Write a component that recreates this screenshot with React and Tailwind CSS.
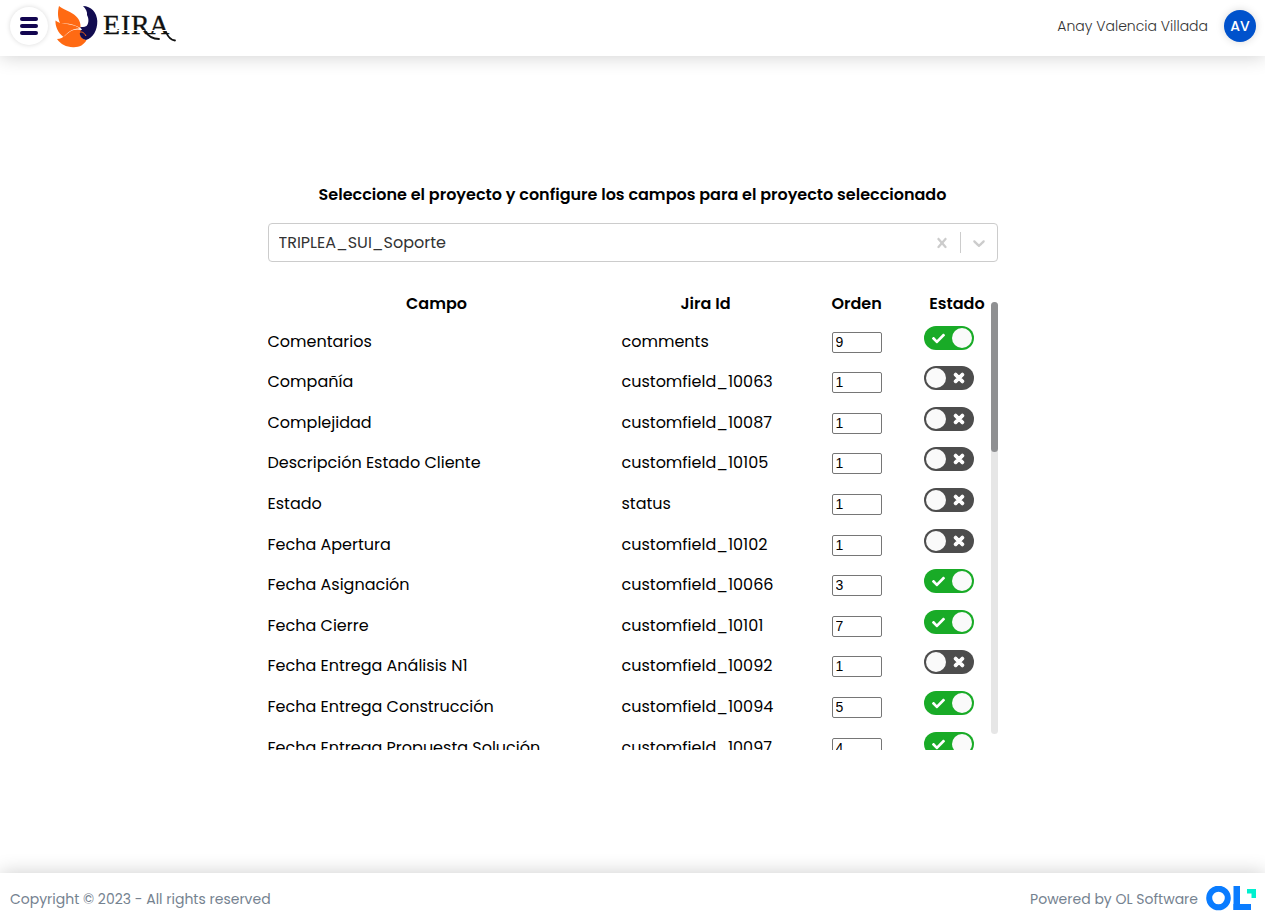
import { useState } from "react";
import { FaCheck, FaTimes } from "react-icons/fa";

const FIELDS = [
  { name: "Comentarios", jiraId: "comments", order: 9, active: true },
  { name: "Compañía", jiraId: "customfield_10063", order: 1, active: false },
  { name: "Complejidad", jiraId: "customfield_10087", order: 1, active: false },
  { name: "Descripción Estado Cliente", jiraId: "customfield_10105", order: 1, active: false },
  { name: "Estado", jiraId: "status", order: 1, active: false },
  { name: "Fecha Apertura", jiraId: "customfield_10102", order: 1, active: false },
  { name: "Fecha Asignación", jiraId: "customfield_10066", order: 3, active: true },
  { name: "Fecha Cierre", jiraId: "customfield_10101", order: 7, active: true },
  { name: "Fecha Entrega Análisis N1", jiraId: "customfield_10092", order: 1, active: false },
  { name: "Fecha Entrega Construcción", jiraId: "customfield_10094", order: 5, active: true },
  { name: "Fecha Entrega Propuesta Solución", jiraId: "customfield_10097", order: 4, active: true },
];

function EiraLogo() {
  return (
    <svg width="124" height="46" viewBox="0 0 124 46" role="img" aria-label="EIRA">
      {/* Wings */}
      <g fill="#ff6a13" transform="translate(1 2)">
        <path d="M4 1C7 4 14 6 19 9.500C24 13 26 18 25.500 23C20 20 12 17.500 5.500 19C2.500 13 2.500 7 4 1Z" />
        <path d="M0.500 15.500C5 19.500 14 18.500 19 20.500C22 21.500 24 22.500 24.500 23.500C18 23 13 27 8.500 32C3 28 0 21 0.500 15.500Z" />
        <path d="M2 34C9 34 12 27.500 17 25.500C20 24.300 24 24 26 25L25.500 31C27 33.500 29 34.500 31.500 35C29 40 24 42.500 18 42.200C11 42 6 39.500 2 34Z" />
      </g>
      {/* Head and neck */}
      <path
        fill="#120c50"
        transform="translate(1 2)"
        d="M28 1C36 1 42 7.500 42.300 16C42.500 25 38 33 31 35C28 34.500 25.500 32.500 25 30C24.500 28 25 25.500 27 24.500L25 22.500C27 21.500 29 22.500 31.500 21C34 18.500 34 13.500 32 10C32.500 7 31 4 28 1Z"
      />
      <path fill="none" stroke="#ff6a13" strokeWidth="1" d="M25 30C27 28 30 29 32 33" />
      <text
        y="31"
        fill="#111"
        stroke="#111"
        strokeWidth="0.300"
        fontSize="28"
        fontFamily="'Liberation Serif', serif"
      >
        <tspan x="49">E</tspan>
        <tspan x="67">I</tspan>
        <tspan x="77">R</tspan>
        <tspan x="95">A</tspan>
      </text>
      <path stroke="#fff" strokeWidth="1" d="M49 27.500H116" />
      {/* Swashes */}
      <g fill="none" stroke="#111" strokeLinecap="round">
        <path strokeWidth="1.800" d="M91 28C94 33 99 36 105 36" />
        <path strokeWidth="1.800" d="M112 29C114 34 117 37 121 37.500" />
      </g>
    </svg>
  );
}

function OlLogo() {
  return (
    <svg width="50" height="26" viewBox="0 1 50 26" role="img" aria-label="OL Software">
      <circle cx="12.500" cy="13" r="9.300" fill="none" stroke="#0a7cff" strokeWidth="6" />
      <rect x="27.500" y="1" width="6.500" height="24" fill="#0a7cff" />
      <rect x="27.500" y="19" width="17.500" height="6" fill="#0a7cff" />
      <rect x="41" y="4" width="9" height="4.500" fill="#00f0cf" />
      <rect x="45.500" y="4" width="4.500" height="9" fill="#00f0cf" />
    </svg>
  );
}

function Toggle({ label, checked, onChange }) {
  return (
    <label className="relative block h-6 w-[50px] cursor-pointer">
      <input
        type="checkbox"
        role="switch"
        aria-label={label}
        checked={checked}
        onChange={onChange}
        className="peer block h-6 w-[50px] cursor-pointer appearance-none rounded-full bg-[#4d4d4d] checked:bg-[#19ab27]"
      />
      <span className="pointer-events-none absolute top-0.5 left-0.5 size-5 rounded-full bg-[#fafafa] transition-transform peer-checked:translate-x-[26px]" />
      {checked ? (
        <FaCheck className="pointer-events-none absolute top-1.5 left-2 size-[13px] text-white" />
      ) : (
        <FaTimes
          stroke="currentColor"
          strokeWidth="40"
          className="pointer-events-none absolute top-[5px] right-2 size-3.5 text-white"
        />
      )}
    </label>
  );
}

export default function App() {
  const [fields, setFields] = useState(FIELDS);
  const [project, setProject] = useState("TRIPLEA_SUI_Soporte");

  const update = (index, change) =>
    setFields(fields.map((field, i) => (i === index ? { ...field, ...change } : field)));

  return (
    <div className="flex min-h-screen flex-col bg-white font-['Poppins','Inter',sans-serif] text-base font-normal text-black">
      <header className="flex h-14 items-center justify-between pr-[9px] pb-1 pl-2.5 shadow-[0_0_20px_rgba(0,0,0,0.2)]">
        <div className="flex items-center gap-1.5">
          <button
            type="button"
            aria-label="Menú"
            className="flex size-[38px] items-center justify-center rounded-full bg-white shadow-[0_0_5px_rgba(0,0,0,0.15)]"
          >
            <span className="flex flex-col gap-[3px]">
              <span className="h-1 w-[18px] rounded-full bg-[#120550]" />
              <span className="h-1 w-[18px] rounded-full bg-[#120550]" />
              <span className="h-1 w-[18px] rounded-full bg-[#120550]" />
            </span>
          </button>
          <a href="#" className="block">
            <EiraLogo />
          </a>
        </div>
        <div className="flex items-center gap-4">
          <span className="text-sm font-light text-[#333]">Anay Valencia Villada</span>
          <span className="flex size-8 items-center justify-center rounded-full bg-[#0052cc] text-sm font-medium text-white shadow-[0_0_8px_rgba(0,0,0,0.15)]">
            AV
          </span>
        </div>
      </header>

      <main className="flex flex-1 flex-col items-center justify-center px-4">
        <div className="w-full max-w-[730px]">
          <h1 className="pt-0.5 text-center text-base leading-7 font-semibold">
            Seleccione el proyecto y configure los campos para el proyecto seleccionado
          </h1>

          <div className="mt-3.5 flex h-[39px] items-center rounded border border-[#ccc]">
            <select
              aria-label="Proyecto"
              value={project}
              onChange={(event) => setProject(event.target.value)}
              className="h-full min-w-0 flex-1 appearance-none bg-transparent px-2.5 text-[#333] outline-none"
            >
              <option value="">Seleccione...</option>
              <option value="TRIPLEA_SUI_Soporte">TRIPLEA_SUI_Soporte</option>
            </select>
            <button
              type="button"
              aria-label="Limpiar selección"
              onClick={() => setProject("")}
              className="px-2 text-[#ccc]"
            >
              <svg width="20" height="20" viewBox="0 0 20 20" fill="currentColor">
                <path d="M14.348 14.849c-0.469 0.469-1.229 0.469-1.697 0l-2.651-3.030-2.651 3.029c-0.469 0.469-1.229 0.469-1.697 0-0.469-0.469-0.469-1.229 0-1.697l2.758-3.15-2.759-3.152c-0.469-0.469-0.469-1.228 0-1.697s1.228-0.469 1.697 0l2.652 3.031 2.651-3.031c0.469-0.469 1.228-0.469 1.697 0s0.469 1.229 0 1.697l-2.758 3.152 2.758 3.15c0.469 0.469 0.469 1.229 0 1.698z" />
              </svg>
            </button>
            <span className="h-[21px] w-px bg-[#ccc]" />
            <span aria-hidden="true" className="px-2 text-[#ccc]">
              <svg width="20" height="20" viewBox="0 0 20 20" fill="currentColor">
                <path d="M4.516 7.548c0.436-0.446 1.043-0.481 1.576 0l3.908 3.747 3.908-3.747c0.533-0.481 1.141-0.446 1.574 0 0.436 0.445 0.408 1.197 0 1.615-0.406 0.418-4.695 4.502-4.695 4.502-0.217 0.223-0.502 0.335-0.787 0.335s-0.57-0.112-0.789-0.335c0 0-4.287-4.084-4.695-4.502s-0.436-1.17 0-1.615z" />
              </svg>
            </span>
          </div>

          <div className="mt-6 flex h-[464px]">
            <div className="min-w-0 flex-1 overflow-y-auto [scrollbar-width:none]">
              <table className="w-full table-fixed border-collapse">
                <colgroup>
                  <col />
                  <col className="w-[210px]" />
                  <col className="w-[92px]" />
                  <col className="w-[67px]" />
                </colgroup>
                <thead>
                  <tr className="h-[35px] align-top">
                    <th className="pt-1.5 pr-4 text-center font-semibold">Campo</th>
                    <th className="pt-1.5 pr-[42px] text-center font-semibold">Jira Id</th>
                    <th className="pt-1.5 pr-[42px] text-center font-semibold">Orden</th>
                    <th className="pt-1.5 text-center font-semibold">Estado</th>
                  </tr>
                </thead>
                <tbody>
                  {fields.map((field, index) => (
                    <tr
                      key={field.name}
                      className="h-10 align-top nth-[5n]:h-[41px] nth-[5n+2]:h-[41px] nth-[5n+4]:h-[41px]"
                    >
                      <td className="pt-[9px] pr-4">{field.name}</td>
                      <td className="pt-[9px]">{field.jiraId}</td>
                      <td className="pt-[11px]">
                        <input
                          type="text"
                          inputMode="numeric"
                          aria-label={`Orden de ${field.name}`}
                          value={field.order}
                          onChange={(event) => update(index, { order: event.target.value })}
                          className="block h-[21px] w-[50px] rounded-xs border border-[#767676] px-[3px] pb-px font-['Liberation_Sans',sans-serif] text-sm leading-none font-normal"
                        />
                      </td>
                      <td className="pt-[5px]">
                        <Toggle
                          label={`Estado de ${field.name}`}
                          checked={field.active}
                          onChange={() => update(index, { active: !field.active })}
                        />
                      </td>
                    </tr>
                  ))}
                </tbody>
              </table>
            </div>
            <div aria-hidden="true" className="my-4 w-[7px] rounded-full bg-[#e6e6e6]">
              <div className="h-[150px] rounded-full bg-[#8f9092]" />
            </div>
          </div>
        </div>
      </main>

      <footer className="flex h-[49px] items-center justify-between pt-0.5 pr-[9px] pl-2.5 text-sm text-[#758290] shadow-[0_0_20px_rgba(0,0,0,0.2)]">
        <span>Copyright © 2023 - All rights reserved</span>
        <a href="#" className="flex items-center gap-2">
          Powered by OL Software
          <OlLogo />
        </a>
      </footer>
    </div>
  );
}
